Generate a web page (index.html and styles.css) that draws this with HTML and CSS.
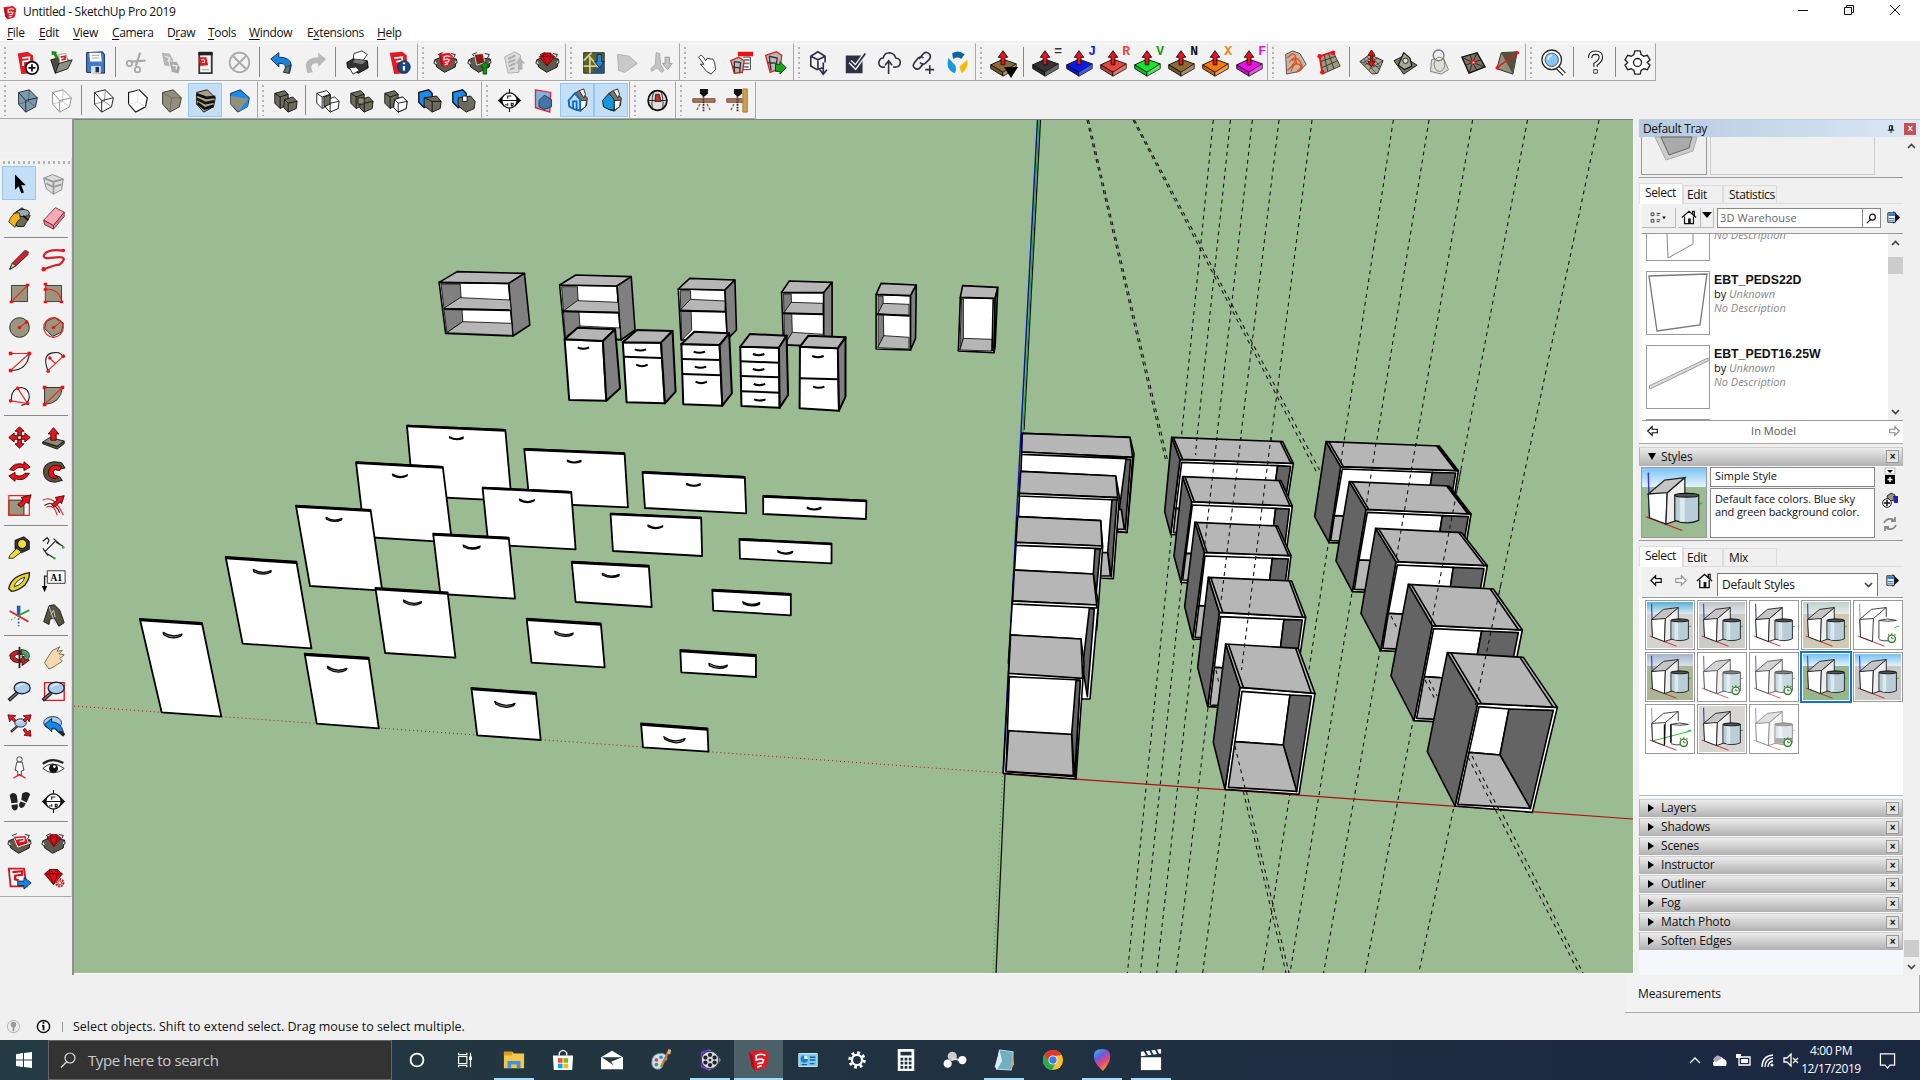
FILE: index.html
```html
<!DOCTYPE html>
<html lang="en">
<head>
<meta charset="utf-8">
<title>Untitled - SketchUp Pro 2019</title>
<link rel="stylesheet" href="styles.css">
</head>
<body>
<svg class="defs" aria-hidden="true">
  <symbol id="logo" viewBox="0 0 24 24"><path d="M1 3l16-2 6 5-3 14-12 4-4-5z" fill="#e01b24"/><path d="M1 3l4 4 3 17-4-5z" fill="#a80f18"/><path d="M8 8q5-4 11-1M9 8v4q5-2 8 0l-1 3-6 1M10 20l5-2" stroke="#fff" stroke-width="1.800" fill="none"/></symbol>
  <symbol id="box" viewBox="0 0 28 28"><path d="M4 5l12-3 9 9-2 10-11 6-8-9z"/><path d="M4 5l10 6 11 0M14 11l-2 16" fill="none" opacity=".4"/></symbol>
  <symbol id="glass" viewBox="0 0 28 28"><path d="M4 5l12-3 9 9-2 10-11 6-8-9z"/><path d="M4 5l8 9 13-3M12 14v13" fill="none"/><path d="M16 2l-1 13-11 3M15 15l8 6" fill="none" opacity=".5"/></symbol>
  <symbol id="solid" viewBox="0 0 28 28"><path d="M2 6l11-3 4 4v11l-9 5-6-6z"/><path d="M13 13l9-3 5 5-1 8-9 4-5-5z"/><path d="M2 6l6 4 9-3M8 10v13M13 13l4 4 10-2M17 17v10" fill="none"/></symbol>
  <symbol id="push" viewBox="0 0 34 34"><path d="M4 20l13-6 14 5-14 9z" fill="currentColor" stroke="#111"/><path d="M4 20v4l13 8v-4z" fill="currentColor" stroke="#111"/><path d="M17 28l14-9v5l-14 8z" fill="currentColor" stroke="#111"/><path d="M17 28l14-9v5l-14 8z" fill="#fff" opacity=".25"/><path d="M4 20v4l13 8v-4z" fill="#000" opacity=".18"/><path d="M17 5l5 7h-3v8h-4v-8h-3z" fill="#f01020" stroke="#111"/></symbol>
  <symbol id="house" viewBox="0 0 28 28"><path d="M11 6l5-3 9 8-1 9-7 6-6-2z" fill="#777567" stroke="#222"/><path d="M16 3l5-2 2 6-2 4z" fill="#eee" stroke="#222"/><path d="M17 14l7 0-1 7-6 4z" fill="#fff" stroke="#333"/><path d="M4 14l7-8 6 7v12l-6-1-6-3z" fill="currentColor" stroke="#111"/></symbol>
  <symbol id="tray" viewBox="0 0 28 28"><path d="M2 11l7-3 17 2-1 9-12 6-9-6z" fill="#5c5a4c" stroke="#111"/><path d="M2 11l-1 4 4 2M26 10l1 4-3 2M9 8l-3-3 5-2M23 9l2-4-5-1" fill="#eee" stroke="#111"/></symbol>
  <symbol id="gem" viewBox="0 0 28 28"><path d="M4 10l6-5h8l6 5-10 12z" fill="#d3131f" stroke="#500"/><path d="M4 10h20M10 5l-1 5 5 12 5-12-1-5M10 5l4 5 4-5" fill="none" stroke="#700"/></symbol>
  <symbol id="lens" viewBox="0 0 28 28"><path d="M2 24l10-9" stroke="#222" stroke-width="4"/><path d="M3 23l9-8" stroke="#777" stroke-width="1.500"/><ellipse cx="17" cy="10" rx="9" ry="6.500" fill="#a9cdec" stroke="#223" stroke-width="1.500"/><path d="M11 9q4-4 9-3" stroke="#e8f5ff" fill="none" stroke-width="1.500"/></symbol>
  <symbol id="compass" viewBox="0 0 28 28"><path d="M20 7l7 7-7 7zM8 7l-7 7 7 7z" fill="#111"/><circle cx="14" cy="14" r="8.500" fill="#fff" stroke="#111" stroke-width="1.300"/><path d="M1 14h26M14 1v5M14 22v5M16 9h-4v3M10 18v2M12 17v3M16 17h2v3h-2z" fill="none" stroke="#111" stroke-width="1.200"/></symbol>
  <symbol id="mesh" viewBox="0 0 28 28"><path d="M4 10l9-6 12 5-4 14-8 3z" fill="#aaa58d" stroke="#222"/><path d="M7 8l12 17M10 6l12 14M4 10l19 4M25 9l-15 9M21 7l-13 7M17 5l-11 7M8 16l15 1" stroke="#333" stroke-width=".7" fill="none"/></symbol>
  <symbol id="arr" viewBox="0 0 16 16"><path d="M2 8l5-5v3h6v4H7v3z" fill="#fff" stroke="currentColor" stroke-width="1.300"/></symbol>
  <symbol id="home" viewBox="0 0 18 18"><path d="M1 9l8-7 8 7M4 8v8h10V8M13 5V2h2v5" fill="#fff" stroke="#111" stroke-width="1.400"/><path d="M8 10h3v6H8z" fill="#111"/></symbol>
  <symbol id="detail" viewBox="0 0 16 16"><path d="M8 1l7 7-7 7z" fill="#111"/><path d="M2 3h8v10H2z" fill="#fff" stroke="#111"/><path d="M2.500 3.500h7v3h-7zM3 8.500h6v1H3zM3 10.500h6v1H3z" fill="#2a7fd4"/></symbol>
  <symbol id="model" viewBox="0 0 50 50"><path d="M5 2l1 36" stroke="#3a3acb" stroke-width="1.200"/><path d="M3 37l29 11" stroke="#c22" stroke-width="1"/><path d="M40 29l8-3" stroke="#2b2"/><path d="M5 19l15-2-1 26-13-5z" fill="#fff" stroke="#222"/><path d="M20 18L34 6v32l-15 5z" fill="#eee" stroke="#222"/><path d="M5 19L18 8l16-2-14 12z" fill="#c5c5c5" stroke="#222"/><path d="M26 20q9-3 19 0v20q-9 4-19 0z" fill="#b9cdd8" stroke="#222"/><path d="M30 21v20h4V20z" fill="#dbe8ee"/><ellipse cx="35.500" cy="20" rx="9.500" ry="1.500" fill="#555" stroke="#111"/></symbol>
  <symbol id="wire" viewBox="0 0 50 50"><path d="M5 2l1 36" stroke="#88c"/><path d="M3 37l29 11" stroke="#c22"/><path d="M43 28l5-2" stroke="#2b2"/><path d="M5 19l15-1-1 25-13-5zM5 19L18 8l16-2-14 12M34 6v10M26 20v20M26 20q9-3 19 0-9 2-19 0M26 41q6 2 12 1" fill="none" stroke="#333"/></symbol>
  <symbol id="clk" viewBox="0 0 12 12"><circle cx="6" cy="7" r="4" fill="#fff" stroke="#397d2c" stroke-width="1.500"/><path d="M6 1v2M6 7V5M6 7h2M2 2l1 1M10 2L9 3" stroke="#397d2c" stroke-width="1.200"/></symbol>
</svg>

<header class="title">
  <svg class="tl"><use href="#logo"/></svg><span>Untitled - SketchUp Pro 2019</span>
  <div class="win"><svg viewBox="0 0 12 12"><path d="M1 6.500h10"/></svg><svg viewBox="0 0 12 12"><path d="M1.500 3.500h7v7h-7zM3.500 3V1.500h7v7H9"/></svg><svg viewBox="0 0 12 12"><path d="M1 1l10 10M11 1L1 11"/></svg></div>
</header>
<nav class="menu"><span><u>F</u>ile</span><span><u>E</u>dit</span><span><u>V</u>iew</span><span><u>C</u>amera</span><span>D<u>r</u>aw</span><span><u>T</u>ools</span><span><u>W</u>indow</span><span>E<u>x</u>tensions</span><span><u>H</u>elp</span></nav>

<div class="bars">
 <div class="bar">
  <div class="grp">
   <b><svg viewBox="0 0 28 28"><path d="M3 4l11-2 6 4 2 20-15 1z" fill="#e01b24"/><path d="M8 9l8-1v4l-7 1v5" stroke="#fff" stroke-width="2" fill="none"/><circle cx="19" cy="20" r="7" fill="#fff" stroke="#111" stroke-width="2"/><path d="M19 16v8M15 20h8" stroke="#111" stroke-width="2"/></svg></b>
   <b><svg viewBox="0 0 28 28"><path d="M2 11l8-2 2 3 9-2 1 5-15 11z" fill="#4f4d42" stroke="#111"/><path d="M11 5l8-1 2 9-9 3z" fill="#fff" stroke="#999"/><path d="M13 8l5-1 0 3-4 1" stroke="#e01b24" stroke-width="2" fill="none"/><path d="M7 26l4-11 15-4-5 10z" fill="#928f7e" stroke="#111"/><path d="M3 1l6 1-1 2 3 4-3 2-3-5-2 1z" fill="#149015"/></svg></b>
   <b><svg viewBox="0 0 28 28"><path d="M4 3l18-1 2 3v21l-20-1z" fill="#3d7bd0" stroke="#123"/><path d="M7 3h13l1 10H8z" fill="#fff"/><path d="M10 6h8M10 9h8" stroke="#999"/><path d="M9 18h11v8H9z" fill="#ddd"/><path d="M14 19h4v6h-4z" fill="#234"/></svg></b><s></s>
   <b><svg class="g" viewBox="0 0 28 28"><path d="M6 13l17-1M17 3l-5 15" stroke-width="2.500"/><circle cx="5" cy="15" r="3" stroke-width="2"/><circle cx="14" cy="22" r="3" stroke-width="2"/></svg></b>
   <b><svg viewBox="0 0 28 28"><path d="M3 3l9 1 4 7-2 8-8-2z" fill="#b5b5b5"/><path d="M11 12l9 1 4 7-2 7-8-2z" fill="#a9a9a9" stroke="#eee"/><path d="M7 7l5 2-2 4M15 17l5 1-1 4" stroke="#eee" stroke-width="1.500" fill="none"/></svg></b>
   <b><svg viewBox="0 0 28 28"><path d="M7 4h14v22H7z" fill="#f4f4f4" stroke="#333" stroke-width="2"/><path d="M6 2h16v4H6z" fill="#222"/><path d="M6 8h9l2 9-9 1z" fill="#e01b24"/><path d="M9 11h4v3h-3" stroke="#fff" fill="none"/><path d="M10 22h8" stroke="#999"/></svg></b>
   <b><svg class="g" viewBox="0 0 28 28"><circle cx="14" cy="14" r="11" stroke-width="2"/><path d="M7 7l14 14M21 7L7 21" stroke-width="2"/></svg></b><s></s>
   <b><svg viewBox="0 0 28 28"><path d="M2 10l9-7v5q13 0 14 9l-2 9-6-1q5-11-6-10v4z" fill="#1c83dd" stroke="#124"/><path d="M24 17l-2 9-6-1 3-6z" fill="#67755b" stroke="#333"/></svg></b>
   <b><svg viewBox="0 0 28 28"><path d="M26 10l-9-7v5Q4 8 3 17l2 9 6-1q-5-11 6-10v4z" fill="#b9b9b9"/></svg></b><s></s>
   <b><svg viewBox="0 0 28 28"><path d="M10 4l9-3 6 4-7 10-9-3z" fill="#fff" stroke="#222"/><path d="M2 14l7-4 16 2 1 8-11 6-12-6z" fill="#333" stroke="#000"/><path d="M9 14l10 2 5-4-13-2z" fill="#777"/><path d="M5 20l7-1 4 4-7 4z" fill="#fff" stroke="#222"/></svg></b><s></s>
   <b><svg viewBox="0 0 28 28"><path d="M3 3l14-1 5 4 1 20-15 1z" fill="#e01b24"/><path d="M8 9l9-1v4l-7 1" stroke="#fff" stroke-width="2" fill="none"/><circle cx="19" cy="19" r="7" fill="#164a86" stroke="#0b2a52"/><path d="M19 18v5M19 14v2" stroke="#fff" stroke-width="2.500"/></svg></b>
  </div>
  <div class="grp">
   <b><svg viewBox="0 0 28 28"><use href="#tray"/><use href="#logo" x="6" y="1" width="17" height="20"/></svg></b>
   <b><svg viewBox="0 0 28 28"><use href="#tray"/><path d="M8 5l10-1 2 10-9 3z" fill="#8b1a1a" stroke="#ddd"/><path d="M20 13l5 6h-3v8h-4v-8h-3z" fill="#119015" stroke="#050"/></svg></b>
   <b><svg viewBox="0 0 28 28"><path d="M4 8l11-6 7 4-2 19-12 1z" fill="#ddd" stroke="#aaa"/><path d="M8 10l8-4M8 14l8-3M9 18l7-3M10 22l5-2" stroke="#aaa" stroke-width="2"/><path d="M21 8l6 7h-3v7h-5v-7h-3z" fill="#b5b5b5"/></svg></b>
   <b><svg viewBox="0 0 28 28"><use href="#tray"/><use href="#gem" x="1" y="-1" width="25" height="24"/></svg></b>
  </div>
  <div class="grp">
   <b><svg viewBox="0 0 28 28"><path d="M3 3h23v23H3z" fill="#59652e" stroke="#222"/><path d="M3 12l9-9M10 26V8l12 14M3 18h18" stroke="#d9cf85" stroke-width="2" fill="none"/><path d="M14 21l11-3v8H14z" fill="#26557f"/><path d="M18 5h5v8h3l-5 7-6-7h3z" fill="#1689ea" stroke="#124"/></svg></b>
   <b><svg viewBox="0 0 28 28"><path d="M3 5l13 2 9 8-14 10-7-2z" fill="#c9c9c9" stroke="#aaa"/></svg></b>
   <b><svg viewBox="0 0 28 28"><path d="M8 3l4 1 1 12 4 7-3 2-5-5-6 4-1-3 5-5z" fill="#c4c4c4" stroke="#aaa"/><path d="M18 8h5v7h3l-5 7-6-7h3z" fill="#c4c4c4" stroke="#999"/></svg></b>
  </div>
  <div class="grp">
   <b><svg viewBox="0 0 28 28"><path d="M6 6q2-1 6 6l2-3 3 1 3 0 2 4 1 8-5 5-5-3-4-5-3-3 4 0L4 8z" fill="#fff" stroke="#222"/></svg></b>
   <b><svg viewBox="0 0 28 28"><path d="M10 2h17v5H10z" fill="#e11"/><path d="M16 8h8v14h-9" fill="#fff" stroke="#333"/><path d="M17 11h6M17 15h6M17 19h5" stroke="#777" stroke-width="2"/><path d="M2 12l9-4 6 4-2 13-9 1z" fill="#bbb" stroke="#c22" stroke-width="1.500"/><path d="M6 13l7 1-1 11M4 19l8 1M6 13v12" stroke="#333" stroke-width="1.500" fill="none"/></svg></b>
   <b><svg viewBox="0 0 28 28"><path d="M3 6l12-4 6 4-2 15-11 4z" fill="#bbb" stroke="#d22" stroke-width="1.500"/><path d="M7 7l9 2-2 13M5 14l11 1M7 7l2 16" stroke="#333" stroke-width="1.500" fill="none"/><path d="M14 16h5v-3l7 7-7 7v-3h-5z" fill="#1ba01b" stroke="#040"/></svg></b>
  </div>
  <div class="grp ink">
   <b><svg viewBox="0 0 28 28"><path d="M15 20l-6 2-7-4V7l8-5 8 5v7M2 7l8 4 8-4M10 11v10M16 14v13M12 22l4 5 4-5"/></svg></b>
   <b><svg viewBox="0 0 28 28"><path d="M4 7h17v18H4z"/><path d="M8 13l6 6L25 4"/><path d="M8 13l6 6L25 4"/></svg></b>
   <b><svg viewBox="0 0 28 28"><path d="M9 19q-7 1-7-5 1-5 5-5 1-6 7-6 6 1 7 6 6 1 5 6-1 5-8 4M13 27V13M9 17l4-5 4 5"/></svg></b>
   <b><svg viewBox="0 0 28 28"><path d="M9 10l5-6q4-3 7 1 2 3-1 6l-4 4q-3 2-6-1M14 9q-3-3-6 0l-4 5q-3 4 0 6 3 3 6 0l4-5M21 17v10M16 22h10"/></svg></b>
   <b><svg class="c" viewBox="0 0 28 28"><path d="M8 4q7-5 14 1l-4 5q-3-3-9 0z"/><path d="M4 9l8 9q1 4-1 8Q0 22 4 9z"/><path d="M25 11q2 9-6 15l-3-7z"/></svg></b>
  </div>
  <div class="grp push">
   <b style="color:#8d6a35"><svg><use href="#push"/><path d="M17 21h14l-7 11z" fill="#000"/></svg></b><s></s>
   <b style="color:#333"><svg><use href="#push"/></svg><em>=</em></b>
   <b style="color:#0a1af0"><svg><use href="#push"/></svg><em>J</em></b>
   <b style="color:#e8463a"><svg><use href="#push"/></svg><em>R</em></b>
   <b style="color:#10e82a"><svg><use href="#push"/></svg><em class="gr">V</em></b>
   <b style="color:#8d6a35"><svg><use href="#push"/></svg><em class="bk">N</em></b>
   <b style="color:#f97a07"><svg><use href="#push"/></svg><em>X</em></b>
   <b style="color:#f20cf0"><svg><use href="#push"/></svg><em>F</em></b>
  </div>
  <div class="grp">
   <b><svg viewBox="0 0 28 28"><path d="M3 5l8-4 8 3 7 12-8 8-14 3z" fill="#c2b9a2" stroke="#444"/><path d="M5 9q7-8 9-2t-9 16M9 24q3-11 9-8t-4 9M7 14q6-10 12-1t-3 11M10 12q5-4 5 3" fill="none" stroke="#e0512a" stroke-width="1.500"/></svg></b>
   <b><svg viewBox="0 0 28 28"><path d="M3 7l15-5 8 16-20 9z" fill="#9c987f" stroke="#333"/><path d="M8 5l4 19M13 4l6 17M4 13l17-6M5 20l18-8" stroke="#333" fill="none"/><path d="M18 2L3 7l3 19" stroke="#e11" stroke-width="2" fill="none"/><circle cx="18" cy="3" r="2.500" fill="#e11"/><circle cx="3" cy="7" r="2.500" fill="#e11"/><circle cx="6" cy="25" r="2.500" fill="#e11"/></svg></b><s></s>
   <b><svg viewBox="0 0 28 28"><path d="M1 13l11-8 15 7-6 14-6 1z" fill="#aaa58d" stroke="#222"/><path d="M5 10l14 16M9 8l14 14M1 13l21 6M27 12l-16 10M21 9l-15 8M17 7l-12 7M12 5l12 14" stroke="#333" stroke-width=".8" fill="none"/><path d="M14 0l4 6h-3v7h3l-4 6-4-6h3V6h-3z" fill="#e11" stroke="#600"/></svg></b>
   <b><svg viewBox="0 0 28 28"><path d="M1 12l10-5 16 10-15 10z" fill="#77745f" stroke="#111"/><path d="M8 12l4-9 7 6 2 9-8 4-7-5z" fill="#aaa88f" stroke="#111" stroke-width="1.300"/><circle cx="14" cy="12" r="3" fill="#ddd" stroke="#111"/></svg></b>
   <b><svg viewBox="0 0 28 28"><path d="M5 11l13-3 6 14-8 5-12-3z" fill="#ddddd5" stroke="#777"/><circle cx="13" cy="6" r="6" fill="#eee" stroke="#777" stroke-width="1.500"/><ellipse cx="14" cy="16" rx="6" ry="8" fill="none" stroke="#777"/></svg></b>
   <b><svg viewBox="0 0 28 28"><path d="M1 8l17-5 9 16-18 7z" fill="#77745f" stroke="#111" stroke-width="1.500"/><path d="M1 8l12 6 14 5M18 3l-5 11-4 12M10 5l3 9 5 9M5 17l8-3 10-3" stroke="#222" fill="none"/><path d="M11 11h5v5h-5z" fill="#e11"/><path d="M13 13h2v2h-2z" fill="#fff"/></svg></b>
   <b><svg viewBox="0 0 28 28"><path d="M7 3l18-1-5 25-18-6z" fill="#928f79" stroke="#222"/><path d="M25 2L20 27 13 14 7 3z" fill="#54523f"/><path d="M2 20L25 3" stroke="#e11" stroke-width="1.500"/><circle cx="2.500" cy="20" r="2" fill="#e11"/><circle cx="25" cy="3" r="2" fill="#e11"/></svg></b>
  </div>
  <div class="grp">
   <b><svg viewBox="0 0 28 28"><path d="M17 18l9 9" stroke="#222" stroke-width="5"/><path d="M17 18l9 9" stroke="#fff" stroke-width="2.500"/><circle cx="12" cy="11" r="11" fill="#fff" stroke="#222" stroke-width="1.500"/><circle cx="12" cy="11" r="7.500" fill="#84c6f8" stroke="#444"/><path d="M8 11q0-4 4-5" stroke="#dff2ff" stroke-width="2" fill="none"/></svg></b><s></s>
   <b><svg viewBox="0 0 28 28"><path d="M8 9q0-6 6-6t6 5q0 4-6 8v3" fill="none" stroke="#222" stroke-width="5"/><path d="M8 9q0-6 6-6t6 5q0 4-6 8v3" fill="none" stroke="#fff" stroke-width="2.500"/><path d="M12 22h4v4h-4z" fill="#fff" stroke="#222"/></svg></b><s></s>
   <b><svg viewBox="0 0 28 28"><path d="M11 1h6l1 4 3 2 4-1 3 5-3 3 3 3-3 5-4-1-3 2-1 4h-6l-1-4-3-2-4 1-3-5 3-3-3-3 3-5 4 1 3-2z" fill="#fff" stroke="#222" stroke-width="1.500"/><circle cx="14" cy="14" r="4.500" fill="#fff" stroke="#222" stroke-width="1.500"/></svg></b>
  </div>
 </div>
 <div class="bar">
  <div class="grp">
   <b><svg fill="#7c9aac" stroke="#223"><use href="#glass"/></svg></b><b><svg fill="#fff" stroke="#888"><use href="#glass"/></svg></b><s></s>
   <b><svg fill="#fff" stroke="#111"><use href="#glass"/></svg></b><b><svg viewBox="0 0 28 28"><path d="M4 5l12-3 9 9-2 10-11 6-8-9z" fill="#fff" stroke="#111" stroke-width="1.300"/><path d="M15 2l-1 14-10 2M14 16l9 5" stroke="#ddd" fill="none"/></svg></b><b><svg fill="#948f7a" stroke="#333"><use href="#box"/></svg></b>
   <b class="on"><svg viewBox="0 0 28 28"><path d="M4 5l12-3 9 9-2 10-11 6-8-9z" fill="#a7a287" stroke="#111"/><path d="M4 7l11 4 10-1M4 12l10 5 10-2M5 17l8 6 10-3" stroke="#111" stroke-width="3" fill="none"/></svg></b>
   <b><svg viewBox="0 0 28 28"><path d="M4 6l11-4 10 9-2 10-11 6-8-9z" fill="#1a8bf0" stroke="#124"/><path d="M4 9l20 3-11 14-9-8z" fill="#948f7a"/><path d="M24 12l-1 9-10 6z" fill="#1a8bf0"/></svg></b>
  </div>
  <div class="grp">
   <b><svg fill="#6d6b5c" stroke="#111"><use href="#solid"/></svg></b><s></s>
   <b><svg viewBox="0 0 28 28"><use href="#solid" fill="#fff" stroke="#111"/><path d="M10 10l7-2v10l-7 3z" fill="#6d6b5c" stroke="#111"/></svg></b>
   <b><svg viewBox="0 0 28 28"><use href="#solid" fill="#6d6b5c" stroke="#111"/><path d="M10 11h7v7h-7z" fill="#8a8875" stroke="#111"/></svg></b>
   <b><svg viewBox="0 0 28 28"><use href="#solid" fill="#6d6b5c" stroke="#111"/><path d="M13 13l9-3 5 5-1 8-9 4-5-5z" fill="#fff" stroke="#111"/><path d="M13 13l4 4 10-2M17 17v10" stroke="#111" fill="none"/></svg></b>
   <b><svg viewBox="0 0 28 28"><path d="M2 5l11-3 4 4v11l-9 5-6-6z" fill="#1a8bf0" stroke="#111" stroke-width="1.500"/><path d="M8 11l14-2 5 6-1 8-9 4-9-7z" fill="#6d6b5c" stroke="#111"/><path d="M8 11l9 4 10 0M17 15v12" stroke="#111" fill="none"/></svg></b>
   <b><svg viewBox="0 0 28 28"><path d="M2 5l11-3 4 4v11l-9 5-6-6z" fill="#1a8bf0" stroke="#111" stroke-width="1.500"/><path d="M8 11l14-2 5 6-1 8-9 4-9-7z" fill="#6d6b5c" stroke="#111"/><path d="M13 9h5v6h-5z" fill="#fff" stroke="#111"/></svg></b>
  </div>
  <div class="grp">
   <b><svg><use href="#compass"/></svg></b>
   <b><svg viewBox="0 0 28 28"><path d="M5 2l17 3-1 22L5 22z" fill="#7fb4de" stroke="#e23" stroke-width="1.500"/><path d="M9 14l6-6 8 5v8l-8 3-6-3z" fill="#4476a5" stroke="#235"/></svg></b>
   <b class="on"><svg viewBox="0 0 28 28" style="color:#b9dcf5"><use href="#house"/><path d="M4 14l7-8 6 7v12l-6-1-6-3zM9 23v-8h4v9" fill="none" stroke="#0a68c8" stroke-width="2"/></svg></b>
   <b class="on"><svg style="color:#1597db"><use href="#house"/></svg></b>
  </div>
  <div class="grp"><b><svg viewBox="0 0 28 28"><ellipse cx="14" cy="14" rx="10.500" ry="11" fill="#ddd" stroke="#111" stroke-width="2"/><path d="M4 14h20M11 3q-4 5-3 21M17 3q4 5 3 21" stroke="#222" fill="none"/><path d="M12 7h4l2 8h-7z" fill="#b32" stroke="#411"/></svg></b></div>
  <div class="grp">
   <b><svg viewBox="0 0 28 28"><path d="M2 12h25v4H2z" fill="#a8794e" stroke="#744"/><path d="M10 1h9v5l-3 3h-3l-3-3z" fill="#111"/><path d="M14 9v18" stroke="#333" stroke-width="2" stroke-dasharray="2 1"/><path d="M10 18l-4 8M18 18l4 8" stroke="#863" stroke-dasharray="3 1.500" stroke-width="1.500"/></svg></b>
   <b><svg viewBox="0 0 28 28"><path d="M2 12h20v4H2z" fill="#a8794e" stroke="#744"/><path d="M10 1h9v5l-3 3h-3l-3-3z" fill="#111"/><path d="M14 9v18" stroke="#333" stroke-width="2" stroke-dasharray="2 1"/><path d="M10 18l-4 8" stroke="#863" stroke-dasharray="3 1.500" stroke-width="1.500"/><path d="M20 1h5v26h-5z" fill="#d0a04f" stroke="#a87a30"/></svg></b>
  </div>
 </div>
</div>

<main>
<aside class="tools">
 <div class="pal">
  <i class="grip"></i>
  <b class="on"><svg viewBox="0 0 28 28"><path d="M9 4l12 12h-5l3 8-3 1-3-8-4 4z" fill="#000"/></svg></b>
  <b><svg viewBox="0 0 28 28"><path d="M3 8l10-4 12 5-2 12-9 5-8-6z" fill="#ddd" stroke="#888"/><path d="M3 8l11 4 11-3M14 12v14M6 14l8 4 9-3" fill="none" stroke="#999" stroke-width="2"/></svg></b>
  <b><svg viewBox="0 0 28 28"><path d="M7 10l10-7 9 9-7 12-8 0z" fill="#6b6a5a" stroke="#111"/><ellipse cx="18" cy="9" rx="7" ry="4" fill="#9ab" stroke="#111"/><path d="M2 19q4-12 12-10l1 7q-4 1-6 9z" fill="#f5b223" stroke="#333"/><path d="M18 12l6 5" stroke="#111" stroke-width="2"/></svg></b>
  <b><svg viewBox="0 0 28 28"><path d="M3 17L16 3l10 5-12 15z" fill="#f8a8b8" stroke="#733"/><path d="M3 17l11 6v4L4 22zM14 23L26 8v5L14 27z" fill="#dd7f95" stroke="#733"/></svg></b>
  <s></s>
  <b><svg viewBox="0 0 28 28"><path d="M3 25l3-7L20 4l4 4L10 21z" fill="#d2222a" stroke="#222"/><path d="M3 25l3-7 4 3z" fill="#e9c9a0" stroke="#222"/><path d="M19 5l2-2 4 3-2 2z" fill="#933"/></svg></b>
  <b><svg viewBox="0 0 28 28"><path d="M25 4Q8 2 4 8t10 4 11 3-6 5-16 5" fill="none" stroke="#d2222a" stroke-width="2.500"/><circle cx="25" cy="4" r="2" fill="#e11"/><circle cx="3" cy="25" r="2.500" fill="#e11"/></svg></b>
  <b><svg viewBox="0 0 28 28"><path d="M5 5h18v18H5z" fill="#9a967d" stroke="#333"/><path d="M5 23L23 5" class="ra"/><path d="M3 22h4v3H3zM21 3h4v3h-4z" fill="#e11"/></svg></b>
  <b><svg viewBox="0 0 28 28"><path d="M5 5h18v18H5z" fill="#9a967d" stroke="#333"/><path d="M5 3v21M5 9q16 0 18 14" class="ra"/><path d="M3 2h4v3H3zM3 8h4v3H3zM3 22h4v3H3zM21 22h4v3h-4z" fill="#e11"/></svg></b>
  <b><svg viewBox="0 0 28 28"><circle cx="14" cy="14" r="11" fill="#9a967d" stroke="#222"/><path d="M14 14l8-6" class="ra"/><circle cx="14" cy="14" r="2" fill="#e11"/><circle cx="22" cy="8" r="2" fill="#e11"/></svg></b>
  <b><svg viewBox="0 0 28 28"><path d="M6 7l9-4 10 6-2 10-10 5-9-9z" fill="#9a967d" stroke="#222"/><circle cx="14" cy="14" r="11" class="ra"/><path d="M14 14l8-6" class="ra"/><circle cx="14" cy="14" r="2" fill="#e11"/></svg></b>
  <b><svg viewBox="0 0 28 28"><path d="M25 5q-2 19-21 19" class="ka"/><path d="M4 5h21L4 24" class="ra"/><path d="M2 3h4v4H2zM23 3h4v4h-4zM2 22h4v4H2z" fill="#e11"/></svg></b>
  <b><svg viewBox="0 0 28 28"><path d="M8 25Q0 5 15 4q8-1 10 6" class="ka"/><path d="M8 24L25 8M9 10l7 6" class="ra"/><circle cx="8" cy="25" r="2" fill="#e11"/><circle cx="25" cy="8" r="2" fill="#e11"/><circle cx="10" cy="10" r="2" fill="#e11"/></svg></b>
  <b><svg viewBox="0 0 28 28"><path d="M5 20Q4 6 16 5q9 1 9 11-1 8-9 9" class="ka"/><path d="M12 6l11 17L4 20" class="ra"/><circle cx="12" cy="6" r="2" fill="#e11"/><circle cx="23" cy="23" r="2" fill="#e11"/><circle cx="4" cy="20" r="2" fill="#e11"/></svg></b>
  <b><svg viewBox="0 0 28 28"><path d="M4 5h20q-2 18-20 19z" fill="#9a967d" stroke="#222"/><path d="M24 5L4 24" class="ra"/><path d="M2 3h4v4H2zM22 3h4v4h-4zM2 22h4v4H2z" fill="#e11"/></svg></b>
  <s></s>
  <b><svg viewBox="0 0 28 28"><path d="M14 2l5 5h-3v5h-4V7H9zM14 26l5-5h-3v-5h-4v5H9zM2 14l6-5v3h4v4H8v3zM26 14l-6-5v3h-4v4h4v3z" fill="#e8141e" stroke="#400"/></svg></b>
  <b><svg viewBox="0 0 28 28"><path d="M2 19l8-5 16 4-8 6z" fill="#8b8873" stroke="#111"/><path d="M2 19v2l16 6 8-6v-3l-8 6z" fill="#57553f" stroke="#111"/><path d="M14 3l6 7h-3v7h-6v-7H8z" fill="#e8141e" stroke="#400"/></svg></b>
  <b><svg viewBox="0 0 28 28"><path d="M3 12Q8 3 19 6l0-3 7 6-7 4 0-3Q11 8 8 13zM25 16q-5 10-16 6l0 3-7-6 7-4 0 3q8 3 11-2z" fill="#e8141e" stroke="#400"/></svg></b>
  <b><svg viewBox="0 0 28 28"><path d="M3 17Q1 5 14 3l9 1 4 6-8 2Q9 10 12 17l9 3 3 4-8 2Q5 26 3 17z" fill="#57553f" stroke="#111"/><path d="M8 16q1-10 10-9l5 1-2 5-5-1q-4 1-1 6l4 2-2 2Q9 22 8 16z" fill="#e8141e" stroke="#400"/></svg></b>
  <b><svg viewBox="0 0 28 28"><path d="M2 8h17v17H2z" fill="#9a967d" stroke="#222"/><path d="M2 3h23v22H2z" class="ra"/><path d="M12 13l6-5-2-3 11-3-3 10-2-2-6 6z" fill="#e8141e" stroke="#400"/></svg></b>
  <b><svg viewBox="0 0 28 28"><path d="M2 8q12-7 23 17M6 16q9-4 12 9" class="ra"/><path d="M4 14q10-7 17 8" class="ka"/><path d="M12 13l6-5-2-3 10-2-3 9-2-2-6 6z" fill="#e8141e" stroke="#400"/></svg></b>
  <s></s>
  <b><svg viewBox="0 0 28 28"><path d="M9 6l10-4 6 5v9l-9 4-7-4z" fill="#333" stroke="#111"/><circle cx="17" cy="10" r="5" fill="#f2dc3e" stroke="#111"/><path d="M11 15l-8 8-1 3 5 0 9-7z" fill="#f2dc3e" stroke="#222"/></svg></b>
  <b><svg viewBox="0 0 28 28"><path d="M4 19L17 6M14 4l8 7M2 15l6 8M17 8l8 5M5 20l10 6M2 7l5-4 2 3-2 4" fill="none" stroke="#222" stroke-width="1.300"/><circle cx="25" cy="14" r="1.500" fill="#2b2"/><circle cx="15" cy="26" r="1.500" fill="#2b2"/></svg></b>
  <b><svg viewBox="0 0 28 28"><path d="M2 22Q4 8 25 4q1 6-5 14-8 7-15 7z" fill="#e8d531" stroke="#222" stroke-width="1.500"/><path d="M8 20q1-7 12-11-2 8-12 11z" fill="#f0f0f0" stroke="#222"/></svg></b>
  <b><svg viewBox="0 0 28 28"><path d="M7 2h20v14H7z" fill="#fff" stroke="#222"/><path d="M7 8H4v12" fill="none" stroke="#222" stroke-width="1.500"/><path d="M1 19h6l-3 7z"/><text x="17" y="13" class="a1">A1</text></svg></b>
  <b><svg viewBox="0 0 28 28"><path d="M13 3v11" stroke="#1c5fbf" stroke-width="4"/><path d="M13 14l12-6" stroke="#2a9d3a" stroke-width="2"/><path d="M3 9l21 12" stroke="#d22" stroke-width="2"/><path d="M13 14L3 20" stroke="#2a9d3a" stroke-dasharray="2 2"/><path d="M13 17v9" stroke="#1c5fbf" stroke-width="2" stroke-dasharray="2 2"/></svg></b>
  <b><svg viewBox="0 0 28 28"><path d="M3 21L9 3l6-1 6 6 5 14-6 4-5-9-5 1-1 6z" fill="#57553f" stroke="#111"/><path d="M9 4l7 20M11 13l3-5 2 8" fill="none" stroke="#ccc"/></svg></b>
  <s></s>
  <b><svg viewBox="0 0 28 28"><path d="M3 11q6-7 14-4v4q-7-2-9 2 4 5 9 2v-3l8 5-8 6v-4Q4 22 3 11z" fill="#c8202a" stroke="#300"/><path d="M16 5q9 1 9 7 0 4-5 5l-1-3q4-3-3-4z" fill="#4fa36a" stroke="#131"/><path d="M14 2v24" stroke="#222" stroke-width="2"/></svg></b>
  <b><svg viewBox="0 0 28 28"><path d="M4 20q5-9 9-14l8-4-3 5 6-1-4 4 6 1-5 4 3 3-9 6-6 3z" fill="#f6d9ae" stroke="#664"/></svg></b>
  <b><svg><use href="#lens"/></svg></b>
  <b><svg viewBox="0 0 28 28"><path d="M4 4h22v20H4z" fill="none" stroke="#e11" stroke-width="1.500"/><use href="#lens"/></svg></b>
  <b><svg viewBox="0 0 28 28"><use href="#lens" x="3" y="4" width="20" height="20"/><path d="M1 2l9 1-3 2 3 3-2 2-3-3-2 3zM27 2l-9 1 3 2-3 3 2 2 3-3 2 3zM27 26l-8-1 2-2-3-4 2-2 3 4 3-2z" fill="#e8141e" stroke="#400" stroke-width=".8"/></svg></b>
  <b><svg viewBox="0 0 28 28"><ellipse cx="13" cy="11" rx="10" ry="7" fill="#a9cdec" stroke="#223"/><path d="M17 17l9 8" stroke="#222" stroke-width="4"/><path d="M4 13l8-7v4q10 0 13 11l-6 0q-2-5-7-4v4z" fill="#1687e6" stroke="#124"/></svg></b>
  <s></s>
  <b><svg viewBox="0 0 28 28"><circle cx="14" cy="5" r="3" fill="#fff" stroke="#333"/><path d="M11 8h6l2 9-3 1v5h-4v-5l-3-1z" fill="#fff" stroke="#333"/><path d="M7 26l7-4 7 4" fill="none" stroke="#e22" stroke-width="1.500"/></svg></b>
  <b><svg viewBox="0 0 28 28"><path d="M2 15Q12 5 26 15q-12 10-24 0z" fill="#fff" stroke="#222"/><circle cx="14" cy="15" r="5" fill="#111"/><circle cx="15" cy="13" r="1.500" fill="#fff"/><path d="M2 10Q12 2 25 9" stroke="#222" stroke-width="2.500" fill="none"/></svg></b>
  <b><svg viewBox="0 0 28 28"><path d="M3 7q4-5 8 0l1 8-7 1zM5 18l7-1q1 6-3 7-4 0-4-6zM17 5q5-4 9 1l-4 9-6-3zM15 14l6 2q-2 6-6 5-3-2 0-7z" fill="#222"/></svg></b>
  <b><svg><use href="#compass"/></svg></b>
  <s></s>
  <b><svg viewBox="0 0 28 28"><use href="#tray"/><path d="M7 6l14-1 3 9-12 4z" fill="#d3131f" stroke="#fff"/><path d="M10 9l9-1 0 3-5 1" stroke="#fff" stroke-width="1.500" fill="none"/></svg></b>
  <b><svg viewBox="0 0 28 28"><use href="#tray"/><use href="#gem" x="2" y="0" width="25" height="22"/></svg></b>
  <b><svg viewBox="0 0 28 28"><path d="M2 4h17l3 20H4z" fill="#fff" stroke="#d3131f" stroke-width="2"/><path d="M6 8l11-1v4l-8 1v4l4 1" stroke="#d3131f" stroke-width="2.500" fill="none"/><path d="M12 18h7v-4l8 6-8 7v-4h-7z" fill="#1687e6" stroke="#124"/></svg></b>
  <b><svg viewBox="0 0 28 28"><use href="#gem"/><circle cx="21" cy="20" r="4" fill="#eee" stroke="#b22" stroke-width="2.500" stroke-dasharray="2 1"/><circle cx="21" cy="20" r="2" fill="none" stroke="#b22"/></svg></b>
 </div>
</aside>

<svg class="view" viewBox="74 120 1559 853">
 <path d="M74 706L1003 773" stroke="#a11" stroke-dasharray="1 3"/>
 <g class="guide">
  <path d="M1213.300 120L1127.400 973M1230.500 120L1140.400 973M1252.300 120L1156.800 973M1279 120L1176 973M1312 120L1202.700 973M1393.300 120L1262.400 973M1429 120L1290 973M1472.600 120L1323.600 973M1527.500 120L1365 973M1599 120L1418.800 973"/>
  <path d="M1087 120L1166 462M1088.500 120L1168 462M1236 760L1286 973M1239 760L1289 973M1133 120L1317 473M1134.500 120L1320 471M1470 760L1579 973M1474 758L1583 973"/>
 </g>
 <path d="M1037.500 120L1003 773" stroke="#11a" stroke-width="1.500"/><path d="M1040.500 120L1024 430M1005 773L996 973" stroke="#111" stroke-width="1.300"/><path d="M1039 120L1023 433" stroke="#2a2" stroke-width="1.200"/><path d="M1002.500 776L993 973" stroke="#292" stroke-dasharray="1 3"/>
 <path d="M1003 774L1633 819" stroke="#b01010" stroke-width="1.200"/>

 <!-- open boxes, first column -->
 <g class="m" transform="translate(980 400) scale(.33333)">
  <path class="w" d="M127 100L450 112 462 162 441 397 400 395 120 300z"/><path class="t" d="M127 100L450 112 458 172 125 156z"/><path class="w" d="M125 156L458 172 441 397 413 395 440 176 125 163z"/><path class="d" d="M438 178H452L436 390 418 328z"/><path class="t" d="M415 328H424L433 388H410z"/>
  <path class="w" d="M122 214L407 228 418 290 400 536 360 534 112 420z"/><path class="t" d="M122 214L407 228 413 293 118 280z"/><path class="w" d="M118 280L413 293V300L117 288z"/><path class="d" d="M396 299H411L394 530 383 458z"/><path class="t" d="M365 458H383L391 528H360z"/>
  <path class="w" d="M113 350L362 362 368 440 350 690 100 570z"/><path class="t" d="M113 350L362 362 366 438 108 427z"/><path class="w" d="M108 427L366 438V446L108 436z"/><path class="d" d="M345 447H361L345 620 335 600z"/>
  <path class="w" d="M103 510L340 522 355 612 330 897 308 897 85 790z"/><path class="t" d="M103 510L340 522 350 615 98 603z"/><path class="w" d="M98 603L350 615V624L97 612z"/><path class="d" d="M328 626H343L322 890 308 800z"/>
  <path class="w" d="M92 705L303 717 312 792 288 1137 70 1120z"/><path class="t" d="M92 705L303 717 308 835 86 820z"/><path class="w" d="M88 830L300 840 286 1130 78 1115z"/><path class="d" d="M288 842L301 842 284 1130 275 1003z"/><path class="t" d="M86 992L275 1003 280 1127 78 1114z"/>
 </g>
 <!-- second column -->
 <g class="m" transform="translate(980 400) scale(.33333)">
  <path class="w" d="M600 178L940 190 905 415 572 403z"/><path class="d" d="M575 112L600 178 572 403 554 335z"/><path class="t" d="M575 112L908 125 940 190 600 178z"/><path class="w" d="M605 187L893 197 875 335 588 325z"/><path class="d" d="M893 197L932 199 900 405 875 335z"/><path class="t" d="M588 325L875 335 900 405 580 397z"/><path d="M580 112L608 178M901 125L933 190"/>
  <path class="w" d="M635 305L937 318 905 560 603 547z"/><path class="d" d="M608 230L635 305 603 547 582 468z"/><path class="t" d="M608 230L903 242 937 318 635 305z"/><path class="w" d="M637 315L887 325 870 470 618 460z"/><path class="d" d="M887 325L928 327 900 550 870 470z"/><path class="t" d="M618 460L870 470 900 550 608 540z"/><path d="M615 230L643 305M897 242L930 318"/>
  <path class="w" d="M673 457L933 467 900 728 638 717z"/><path class="d" d="M645 367L673 457 638 717 614 620z"/><path class="t" d="M645 367L893 378 933 467 673 457z"/><path class="w" d="M675 468L877 475 858 627 657 617z"/><path class="d" d="M877 475L925 477 893 720 858 627z"/><path class="t" d="M657 617L858 627 890 720 645 712z"/><path d="M651 367L681 457M887 378L926 467"/>
  <path class="w" d="M718 637L977 652 935 932 683 920z"/><path class="d" d="M685 532L718 637 683 920 653 802z"/><path class="t" d="M685 532L935 543 977 652 718 637z"/><path class="w" d="M722 650L912 658 893 812 703 802z"/><path class="d" d="M912 658L967 660 930 925 893 812z"/><path class="t" d="M703 802L893 812 930 925 690 915z"/><path d="M692 532L728 637M928 543L968 652"/>
  <path class="w" d="M780 862L1005 880 957 1183 735 1168z"/><path class="d" d="M737 732L780 862 735 1168 700 1027z"/><path class="t" d="M737 732L955 745 1005 880 780 862z"/><path class="w" d="M786 874L930 885 910 1035 765 1025z"/><path class="d" d="M930 885L994 888 950 1175 910 1035z"/><path class="t" d="M765 1025L910 1035 950 1174 745 1162z"/><path d="M745 732L790 862M947 745L994 880"/>
 </g>
 <!-- third column -->
 <g class="m" transform="translate(1280 400) scale(.33333)">
  <path class="w" d="M182 200L535 212 500 440 147 428z"/><path class="d" d="M138 125L182 200 147 428 104 350z"/><path class="t" d="M138 125L478 138 535 212 182 200z"/><path class="w" d="M187 207L457 217 435 357 163 347z"/><path class="d" d="M457 217L527 219 490 432 435 357z"/><path class="t" d="M163 347L435 357 490 432 152 422z"/><path d="M146 125L190 200M470 138L527 212M474 138L531 212"/>
  <path class="w" d="M258 328L573 342 533 588 217 575z"/><path class="d" d="M208 245L258 328 217 575 168 483z"/><path class="t" d="M208 245L508 258 573 342 258 328z"/><path class="w" d="M262 337L487 347 465 490 237 480z"/><path class="d" d="M487 347L565 350 525 580 465 490z"/><path class="t" d="M237 480L465 490 525 580 223 568z"/><path d="M216 245L266 328M500 258L564 342M504 258L568 342"/>
  <path class="w" d="M348 485L622 497 575 765 302 752z"/><path class="d" d="M287 385L348 485 302 752 243 640z"/><path class="t" d="M287 385L545 398 622 497 348 485z"/><path class="w" d="M352 495L520 502 498 650 325 640z"/><path class="d" d="M520 502L612 506 568 757 498 650z"/><path class="t" d="M325 640L498 650 568 757 308 745z"/><path d="M295 385L357 485M537 398L613 497"/>
  <path class="w" d="M457 677L727 690 670 975 402 962z"/><path class="d" d="M385 553L457 677 402 962 333 828z"/><path class="t" d="M385 553L640 567 727 690 457 677z"/><path class="w" d="M461 686L605 693 578 840 433 830z"/><path class="d" d="M605 693L715 698 662 968 578 840z"/><path class="t" d="M433 830L578 840 662 968 410 955z"/><path d="M394 553L467 677M631 567L716 690"/>
  <path class="w" d="M593 910L832 922 757 1237 525 1218z"/><path class="d" d="M502 758L593 910 525 1218 442 1055z"/><path class="t" d="M502 758L730 772 832 922 593 910z"/><path class="w" d="M597 920L687 927 660 1065 567 1057z"/><path class="d" d="M687 927L820 931 751 1226 660 1065z"/><path class="t" d="M567 1057L660 1065 751 1225 533 1213z"/><path d="M512 758L604 910M720 772L820 922"/>
 </g>
 <g class="guide">
  <path d="M1196.900 437L1195.600 455M1217 437L1203 560M1241 437L1220 610M1271 437L1241.500 670M1343.700 443L1341 462M1376 443L1366 507M1416 443L1396 560M1461 470L1431 625M1500.700 585L1475.500 705"/>
  <path d="M1235 746L1246 792M1468 757L1495 810M1472 756L1499 810M1425 680L1436 701M1429 680L1437 696M1391 616L1398 630M1216 670L1219 684"/>
 </g>

 <!-- bookcases and pedestals -->
 <g class="m" transform="translate(420 250) scale(.38265 .33333)">
  <path class="w" d="M50 97L232 100 243 258 67 250z"/><path class="t" d="M50 97L97 65 273 70 232 100z"/><path class="s" d="M232 100L273 70 287 225 243 258z"/>
  <path class="s n" d="M55 102H105L112 215 70 248z"/><path class="t n" d="M62 175L105 143 236 150 238 180zM70 248L112 215 240 220 242 256z"/><path class="f" d="M62 177L238 181"/>
  <path class="w" d="M365 105L515 108 525 270 378 262z"/><path class="t" d="M365 105L407 75 552 80 515 108z"/><path class="s" d="M515 108L552 80 562 240 525 270z"/>
  <path class="s n" d="M370 110H411L418 230 380 260z"/><path class="t n" d="M375 183L411 152 518 157 520 187zM400 245L418 228 523 234 524 268z"/><path class="f" d="M372 184L520 188"/>
  <path class="w" d="M675 117L797 120 803 270 682 270z"/><path class="t" d="M675 117L705 85 823 90 797 120z"/><path class="s" d="M797 120L823 90 827 240 803 268z"/>
  <path class="s n" d="M680 122H707L710 240 684 270z"/><path class="t n" d="M680 180L707 148 797 153 797 185z"/><path class="f" d="M678 182L798 185"/>
  <path class="w" d="M945 127L1055 128 1055 290 950 285z"/><path class="t" d="M945 127L965 93 1077 97 1055 128z"/><path class="s" d="M1055 128L1077 97V260L1055 290z"/>
  <path class="s n" d="M950 132H970L973 247 953 283z"/><path class="t n" d="M950 190L970 157 1053 160V192zM953 283L973 247 1055 253V288z"/><path class="f" d="M947 190L1054 193"/>
  <path class="w" d="M1192 133L1282 137V300L1192 297z"/><path class="t" d="M1192 133L1205 100 1297 105 1282 137z"/><path class="s" d="M1282 137L1297 105 1295 265 1282 300z"/>
  <path class="s n" d="M1197 138H1210L1212 258 1197 292z"/><path class="t n" d="M1196 192L1210 160 1278 163V196zM1196 293L1212 257 1278 262V297z"/><path class="f" d="M1194 193L1280 197"/>
  <path class="w" d="M1412 142L1503 145 1500 308 1407 303z"/><path class="t" d="M1412 142L1418 107 1510 112 1503 145z"/><path class="s" d="M1503 145L1510 112 1503 290 1500 308z"/><path class="s n" d="M1415 147H1420V265L1411 300z"/><path class="t n" d="M1411 300L1420 265 1495 268V303z"/><path d="M1498 148L1495 303"/>
  <g class="f">
  <path class="w" d="M378 268L478 273 487 452 390 450z"/><path class="t" d="M378 268L412 233 510 238 478 273z"/><path class="s" d="M478 273L510 238 523 415 487 452z"/>
  <path class="w" d="M530 277L630 278 640 460 540 457z"/><path class="t" d="M530 277L567 240 660 243 630 278z"/><path class="s" d="M630 278L660 243 668 425 640 460z"/><path d="M533 320L632 324"/>
  <path class="w" d="M683 282L783 285 790 467 688 463z"/><path class="t" d="M683 282L717 245 808 250 783 285z"/><path class="s" d="M783 285L808 250 815 430 790 467z"/><path d="M685 327L785 330M687 372L787 376"/>
  <path class="w" d="M837 290L938 293 940 473 840 468z"/><path class="t" d="M837 290L862 252 958 257 938 293z"/><path class="s" d="M938 293L958 257 962 435 940 473z"/><path d="M838 334L938 338M838 378L939 382M839 424L940 428"/>
  <path class="w" d="M993 290L1092 295 1095 482 992 475z"/><path class="t" d="M993 290L1015 257 1112 262 1092 295z"/><path class="s" d="M1092 295L1112 262V440L1095 482z"/><path d="M993 385L1092 388"/>
  <path d="M412 292q15 9 30 0M561 298q15 7 30 0M565 344q15 9 30 0M715 305q15 7 30 0M718 350q15 7 30 0M720 395q15 9 30 0M870 312q15 7 30 0M870 357q15 7 30 0M872 402q15 7 30 0M873 448q15 7 30 0M1025 318q15 7 30 0M1027 410q15 7 30 0"/>
  </g>
 </g>

 <!-- door and drawer fronts -->
 <g class="m p" transform="translate(120 400) scale(.4847 .33333)">
  <path d="M592 77L795 90 808 303 605 288zM834 147L1041 160 1048 322 845 309zM1078 216L1289 231 1292 340 1083 324zM1327 288L1540 302 1539 357 1327 342z"/>
  <path d="M487 187L666 201 685 427 505 411zM748 263L931 276 940 448 760 434zM1012 341L1199 353 1201 468 1017 453zM1278 417L1468 431V490L1279 476z"/>
  <path d="M363 317L517 330 541 572 392 558zM646 401L802 413 815 596 661 582zM932 485L1091 497 1097 621 940 606zM1222 569L1384 582V646L1224 632z"/>
  <path d="M218 471L364 485 395 745 253 731zM527 564L676 577 692 773 547 759zM839 656L992 670 1000 802 849 788zM1156 750L1312 765V831L1158 817z"/>
  <path d="M41 657L169 669 209 950 86 937zM381 761L513 773 534 985 406 971zM725 864L858 878 868 1020 737 1006zM1075 970L1212 985 1214 1055 1079 1042z"/>
  <path class="e" d="M592 78L795 91M834 148L1041 161M1078 217L1289 232M1327 289L1540 303M487 188L666 202M748 264L931 277M1012 342L1199 354M1278 418L1468 432M363 319L517 332M646 403L802 415M932 487L1091 499M1222 571L1384 584M218 474L364 488M527 567L676 580M839 659L992 673M1156 753L1312 768M41 660L169 672M381 764L513 776M725 867L858 881M1075 973L1212 988"/>
  <path class="h" d="M680 110q13 12 28 1l0 4q-13 8-28-1zM923 180q13 12 28 1l0 4q-13 8-28-1zM1169 250q13 12 28 1l0 4q-13 8-28-1zM1418 321q13 12 28 1l0 4q-13 8-28-1zM562 222q15 14 31 2l-1 4q-14 10-29-1zM824 297q15 14 31 2l-1 4q-14 10-29-1zM1089 375q15 14 31 2l-1 4q-14 10-29-1zM1357 452q15 14 31 2l-1 4q-14 10-29-1zM425 352q16 15 33 3l-1 5q-15 10-31-2zM708 435q17 15 35 3l-1 5q-16 10-33-2zM995 520q17 15 35 3l-1 5q-16 10-33-2zM1285 605q17 15 35 3l-1 5q-16 10-33-2zM275 508q18 16 37 4l-1 5q-17 12-35-2zM585 600q18 17 37 5l-1 5q-17 12-35-3zM897 694q18 17 38 5l-1 5q-18 12-36-3zM1215 790q18 17 38 5l-1 5q-18 12-36-3zM89 697q18 18 39 5l-2 6q-18 13-36-4zM428 799q19 19 40 6l-2 6q-18 13-37-5zM773 904q20 20 42 6l-3 7q-18 12-37-5zM1122 1010q21 21 44 6l-3 7q-19 13-39-5z"/>
 </g>
</svg>

<aside class="dock">
 <div class="dt"><span>Default Tray</span><svg class="pin" viewBox="0 0 10 10"><path d="M3 1h4v5H3zM1 6.500h8M5 7v3M6 1v5" fill="none" stroke="#111" stroke-width="1.200"/></svg><i>x</i></div>
 <div class="db">
 <div class="dc">
  <div class="comp"><i><svg viewBox="0 0 64 38"><path d="M13 0l11 23 27-9 4-14z" fill="#ccc" stroke="#aaa"/><path d="M19 0l8 18 20-7 3-11z" fill="#aaa" stroke="#666"/></svg></i><i></i></div>
  <div class="tabs"><span class="cur">Select</span><span>Edit</span><span>Statistics</span></div>
  <div class="srch"><i class="bt v"><svg viewBox="0 0 18 12"><path d="M1 1h3v3H1zM1 8h3v3H1zM7 1.500h4M7 3.500h3M7 8.500h4M7 10.500h3" fill="none" stroke="#333"/><path d="M13 5h4l-2 3z"/></svg></i><i class="bt"><svg class="hm"><use href="#home"/></svg></i><i class="bt dn"></i><span class="in">3D Warehouse</span><i class="mg"><svg viewBox="0 0 12 12"><circle cx="7" cy="4.500" r="3.200"/><path d="M5 7l-4 4"/></svg></i><svg class="det"><use href="#detail"/></svg></div>
  <div class="list">
   <div class="rows">
    <div class="row r0"><i><svg viewBox="0 0 62 26"><path d="M20 0l1 24 25-14V0" fill="none" stroke="#888"/></svg></i><p><em>No Description</em></p></div>
    <div class="row"><i><svg viewBox="0 0 62 62"><path d="M2 4l58-2-7 51-43 6z" fill="#fff" stroke="#777" stroke-width="1.300"/></svg></i><p><strong>EBT_PEDS22D</strong><br>by <em>Unknown</em><br><em>No Description</em></p></div>
    <div class="row"><i><svg viewBox="0 0 62 62"><path d="M2 40l59-28v3L3 43z" fill="#ddd" stroke="#999"/></svg></i><p><strong>EBT_PEDT16.25W</strong><br>by <em>Unknown</em><br><em>No Description</em></p></div>
    <div class="row last"><i></i></div>
   </div>
   <div class="sb"><svg viewBox="0 0 9 6"><path d="M1 5l3.500-3.500L8 5"/></svg><i></i><svg viewBox="0 0 9 6"><path d="M1 1l3.500 3.500L8 1"/></svg></div>
  </div>
  <div class="inm"><svg style="color:#111"><use href="#arr"/></svg><span>In Model</span><svg class="flip" style="color:#888"><use href="#arr"/></svg></div>
  <div class="hd open"><span>Styles</span><i>×</i></div>
  <div class="sty"><i class="pv"><svg><use href="#model"/></svg></i><div class="tx"><div>Simple Style</div><div>Default face colors. Blue sky and green background color.</div></div>
   <div class="si"><svg viewBox="0 0 16 16"><path d="M3 0h10v6H3z" fill="#fff" stroke="#bbb"/><path d="M5 2h6L8 5zM3 7h10v9H3z"/><path d="M8 9v5M5.500 11.500h5" stroke="#fff" stroke-width="1.500"/></svg><svg viewBox="0 0 16 16"><path d="M5 4l4-3 4 2v5l-6 1z" fill="#9a967d" stroke="#333"/><path d="M11 4h5v7h-4z" fill="#22b"/><circle cx="5" cy="11" r="4.300" fill="#fff" stroke="#111"/><path d="M5 8v6M2 11h6" stroke="#111" stroke-width="1.500"/></svg><svg viewBox="0 0 16 16"><path d="M2 7q2-5 8-4l3 2M14 9q-2 5-8 4l-3-2M13 1v4H9M3 15v-4h4" fill="none" stroke="#888" stroke-width="1.800"/></svg></div></div>
  <div class="tabs t2"><span class="cur">Select</span><span>Edit</span><span class="mx">Mix</span></div>
  <div class="nav"><svg style="color:#111"><use href="#arr"/></svg><svg class="flip" style="color:#999"><use href="#arr"/></svg><svg class="hm"><use href="#home"/></svg><span>Default Styles<svg viewBox="0 0 9 6"><path d="M1 1l3.500 3.500L8 1"/></svg></span><svg class="det"><use href="#detail"/></svg></div>
  <div class="grid">
   <i class="haze"><svg><use href="#model"/></svg></i><i class="grey"><svg><use href="#model"/></svg></i><i><svg><use href="#model"/></svg></i><i class="sand"><svg><use href="#model"/></svg></i><i><svg viewBox="0 0 50 50"><use href="#wire"/><use href="#clk" x="34" y="33" width="12" height="12"/></svg></i>
   <i class="olive"><svg><use href="#model"/></svg></i><i><svg viewBox="0 0 50 50"><use href="#model" opacity=".75"/><use href="#clk" x="34" y="33" width="12" height="12"/></svg></i><i><svg viewBox="0 0 50 50"><use href="#model" opacity=".75"/><use href="#clk" x="34" y="33" width="12" height="12"/></svg></i><i class="green sel"><svg><use href="#model"/></svg></i><i class="sky"><svg><use href="#model"/></svg></i>
   <i><svg viewBox="0 0 50 50"><path d="M6 38l42-11" stroke="#2b2"/><use href="#wire"/><path d="M19 20v22M26 20v20" stroke="#111" stroke-width="1.500"/><use href="#clk" x="34" y="33" width="12" height="12"/></svg></i><i class="plain"><svg><use href="#model"/></svg></i><i><svg viewBox="0 0 50 50"><use href="#model" opacity=".5"/><path d="M26 35h19v6H26z" fill="#aaa"/><use href="#clk" x="34" y="33" width="12" height="12"/></svg></i>
  </div>
  <div class="hd"><span>Layers</span><i>×</i></div><div class="hd"><span>Shadows</span><i>×</i></div><div class="hd"><span>Scenes</span><i>×</i></div><div class="hd"><span>Instructor</span><i>×</i></div><div class="hd"><span>Outliner</span><i>×</i></div><div class="hd"><span>Fog</span><i>×</i></div><div class="hd"><span>Match Photo</span><i>×</i></div><div class="hd"><span>Soften Edges</span><i>×</i></div>
 </div>
 <div class="sb big"><svg viewBox="0 0 9 6"><path d="M1 5l3.500-3.500L8 5"/></svg><i></i><svg viewBox="0 0 9 6"><path d="M1 1l3.500 3.500L8 1"/></svg></div>
 </div>
</aside>
</main>

<div class="meas"><span>Measurements</span></div>
<div class="status"><svg viewBox="0 0 16 16"><circle cx="8" cy="8" r="6.500" fill="none" stroke="#aaa"/><path d="M8 3q3 0 3 3 0 2-2 3v4H7V9Q5 8 5 6q0-3 3-3z" fill="#999"/></svg><svg viewBox="0 0 16 16"><circle cx="8" cy="8" r="6.500" fill="#fff" stroke="#111" stroke-width="1.600"/><path d="M8 3v2M8 6.500V12M6.500 7H8" stroke="#111" stroke-width="2"/></svg><i></i><span>Select objects. Shift to extend select. Drag mouse to select multiple.</span></div>

<footer class="task">
 <b class="st"><svg viewBox="0 0 16 16"><path d="M0 2.200L7 1v6.500H0zM8 .9L16 0v7.500H8zM0 8.500h7V15l-7-1zM8 8.500h8V16l-8-1z" fill="#fff"/></svg></b>
 <div class="find"><svg viewBox="0 0 16 16"><circle cx="10" cy="6" r="5"/><path d="M6.500 10L1 15.500"/></svg><span>Type here to search</span></div>
 <b><svg viewBox="0 0 24 24"><circle cx="12" cy="12" r="7" fill="none" stroke="#fff" stroke-width="2"/></svg></b>
 <b class="tv"><svg viewBox="0 0 24 24"><path d="M5 8h9v8H5zM5 4v2h9V4M5 20v-2h9v2M18 4v16" fill="none" stroke="#fff" stroke-width="1.300"/><path d="M16.500 8h3v4h-3z" fill="#fff"/></svg></b>
 <b class="run"><svg viewBox="0 0 24 24"><path d="M1 3h9l2 2h11v16H1z" fill="#f6c64b"/><path d="M1 3h9v4H1z" fill="#dd9b1f"/><path d="M5 21v-8h14v8h-4v-4H9v4z" fill="#3f93d8"/></svg></b>
 <b><svg viewBox="0 0 24 24"><path d="M8 7V4q4-5 8 0v3" fill="none" stroke="#fff" stroke-width="1.500"/><path d="M1 7h22l-1 16H2z" fill="#fff"/><path d="M6.500 10h5v5h-5z" fill="#f25022"/><path d="M12.500 10h5v5h-5z" fill="#7fba00"/><path d="M6.500 16h5v5h-5z" fill="#00a4ef"/><path d="M12.500 16h5v5h-5z" fill="#ffb900"/></svg></b>
 <b><svg viewBox="0 0 24 24"><path d="M0 9l12-7 12 7v13H0z" fill="#fff"/><path d="M1 9h22l-12 5 3 4z" fill="#23383f"/></svg></b>
 <b><svg viewBox="0 0 24 24"><path d="M2 15Q2 4 14 5q6 2 4 7-5 0-4 4 0 6-6 6-6-1-6-7z" fill="#cfe0ec" stroke="#89a"/><circle cx="7" cy="12" r="2" fill="#e33"/><circle cx="12" cy="9" r="2" fill="#2a8de0"/><circle cx="7" cy="17" r="2" fill="#3a3"/><path d="M12 20L20 3" stroke="#c87a2c" stroke-width="2.500"/><path d="M19 5l1-5 3 1-1 5z" fill="#e8b878"/></svg></b>
 <b class="run"><svg viewBox="0 0 24 24"><path d="M10 0l8 4 6 8-6 8-8 4z" fill="#4a9ae0"/><path d="M2 3l9-3v24l-9-4z" fill="#6d37c8"/><circle cx="12" cy="12" r="9.500" fill="#d5dbe2" stroke="#333"/><g fill="#222"><circle cx="12" cy="12" r="1.500"/><circle cx="12" cy="6.500" r="2.300"/><circle cx="12" cy="17.500" r="2.300"/><circle cx="7" cy="9.300" r="2.300"/><circle cx="17" cy="9.300" r="2.300"/><circle cx="7" cy="14.800" r="2.300"/><circle cx="17" cy="14.800" r="2.300"/></g></svg></b>
 <b class="run act"><svg><use href="#logo"/></svg></b>
 <b><svg viewBox="0 0 24 24"><path d="M2 5h20v14H2z" fill="#7cc7f2" stroke="#dff"/><circle cx="8" cy="11" r="4" fill="#1f7fc4"/><path d="M8 11V7a4 4 0 014 4z" fill="#fff"/><path d="M14 9h6M14 12h6M5 17h6M14 16h5" stroke="#1363a5" stroke-width="1.500"/></svg></b>
 <b><svg viewBox="0 0 24 24"><circle cx="12" cy="12" r="5.500" fill="none" stroke="#fff" stroke-width="2.500"/><circle cx="12" cy="12" r="8" fill="none" stroke="#fff" stroke-width="3" stroke-dasharray="3.100 3.180"/></svg></b>
 <b><svg viewBox="0 0 24 24"><path d="M3 0h18v24H3z" fill="#fff"/><path d="M6 3h12v4H6z" fill="#20313f"/><path d="M6 11h12M6 15.500h12M6 20h12" stroke="#20313f" stroke-width="3" stroke-dasharray="3 1.500"/></svg></b>
 <b><svg viewBox="0 0 24 24"><circle cx="9" cy="8" r="5" fill="#ccc"/><circle cx="4" cy="16" r="4.500" fill="#fff"/><path d="M9 10l11 3" stroke="#ddd" stroke-width="2"/><circle cx="20" cy="12" r="4.500" fill="#fff"/></svg></b>
 <b class="run two"><svg viewBox="0 0 24 24"><path d="M7 1l15 2-2 20-16-1z" fill="#6fb0c3" stroke="#cde"/><path d="M7 1L2 19l2 4 6-10z" fill="#d9eef2"/><path d="M22 3l1 14-4 6z" fill="#b8a98a"/></svg></b>
 <b><svg viewBox="0 0 24 24"><circle cx="12" cy="12" r="11" fill="#fbc02d"/><path d="M2.500 6.500A11 11 0 0011 23l4-8-7-2z" fill="#2da94f"/><path d="M2.500 6.500A11 11 0 0121.500 6.500L12 8l-5 5z" fill="#e0382c"/><circle cx="12" cy="12" r="5" fill="#fff"/><circle cx="12" cy="12" r="4" fill="#3b7ded"/></svg></b>
 <b class="run"><svg viewBox="0 0 24 24"><defs><linearGradient id="pg" x1="0" y1="0" x2=".6" y2="1"><stop offset="0" stop-color="#28c6f0"/><stop offset=".4" stop-color="#6a5ae0"/><stop offset=".7" stop-color="#e2457c"/><stop offset="1" stop-color="#f79a2c"/></linearGradient></defs><path d="M12 0q9 0 9 8 0 7-8 16l-2-2Q3 15 3 8q0-8 9-8z" fill="url(#pg)"/></svg></b>
 <b class="run"><svg viewBox="0 0 24 24"><path d="M1 9h22v14H1z" fill="#fff"/><path d="M1 3L23 0v5L1 8z" fill="#fff"/><path d="M5 2l3 5M11 1l3 6M17 0l3 6" stroke="#20313f" stroke-width="2"/></svg></b>
 <div class="sys">
  <svg viewBox="0 0 16 16"><path d="M3 11l5-5 5 5" class="l"/></svg><svg viewBox="0 0 16 16"><path d="M3 14q-3-4 2-6 3-6 8-1 4 2 2 7z" fill="#fff"/><path d="M2 8q4-8 9-2l-6 4z" fill="#aab"/></svg><svg viewBox="0 0 16 16"><path d="M4 5h11v8H4z" class="l"/><path d="M6 7h7v4H6zM1 2h5v4H1z" fill="#fff"/></svg><svg viewBox="0 0 16 16"><path d="M3 15Q3 4 14 3M6 15q0-8 8-9M9 15q0-5 5-6" class="l"/><circle cx="13" cy="13" r="1.500" fill="#fff"/></svg><svg viewBox="0 0 16 16"><path d="M1 6h3l4-4v12l-4-4H1zM10 6l5 5M15 6l-5 5" class="l"/></svg>
  <div class="clock">4:00 PM<br>12/17/2019</div>
  <svg class="no" viewBox="0 0 18 18"><path d="M1.500 2h15v12h-5l-2.500 3-2.500-3h-5z" class="l"/></svg>
 </div>
</footer>
</body>
</html>
```
FILE: styles.css
```css
* { box-sizing: border-box; }
html, body { margin: 0; height: 1080px; overflow: hidden; }
body { width: 1920px; background: #f0f0f0; color: #111; font: 12px/16px "Open Sans", "Noto Sans", sans-serif; display: flex; flex-direction: column; position: relative; }
i, em.bk { font-style: normal; }
svg { display: block; overflow: visible; flex: none; }
.defs { position: absolute; width: 0; height: 0; }

.title { height: 24px; background: #fff; display: flex; align-items: center; padding-left: 3px; letter-spacing: -.3px; flex: none; }
.tl { width: 14px; height: 15px; margin-right: 6px; }
.win { margin-left: auto; display: flex; gap: 34px; padding-right: 19px; margin-top: -4px; }
.win svg { width: 12px; height: 12px; fill: none; stroke: #111; }
.menu { height: 17px; background: #fff; display: grid; grid-template-columns: 32px 34px 39px 55px 41px 41px 58px 70px 40px; padding-left: 7px; line-height: 18px; letter-spacing: -.35px; flex: none; }
.menu u { text-underline-offset: 2px; }

.bars { height: 78px; padding-top: 2px; flex: none; }
.bar { display: flex; height: 38px; }
.grp { display: flex; align-items: center; height: 38px; padding: 0 1px 0 10px; border-right: 1px solid #a8a8a8; border-bottom: 1px solid #a8a8a8; border-top: 1px solid #fafafa; background: repeating-linear-gradient(#b4b4b4 0 2px, #f0f0f0 2px 5px) 4px 3px / 2px 31px no-repeat, #f2f2f2; }
.grp b, .pal b { width: 34px; height: 34px; display: flex; align-items: center; justify-content: center; position: relative; }
.grp b svg, .pal b svg { width: 25px; height: 25px; }
.grp s, .pal s { width: 8px; height: 30px; background: linear-gradient(#888, #888) 3px 0 / 1px 100% no-repeat; }
.on { background: #c4def5; border: 1px solid #90c8f6; }
.g { fill: none; stroke: #a9a9a9; }
.ink path { fill: none; stroke: #2f3143; stroke-width: 1.800px; }
.ink .c path { stroke: none; }
.ink .c path:nth-child(1) { fill: #0b64a0; }
.ink .c path:nth-child(2) { fill: #109bdc; }
.ink .c path:nth-child(3) { fill: #fbb900; }
.ink b:nth-child(2) path:nth-child(1) { fill: #2f3143; }
.ink b:nth-child(2) path:nth-child(2) { stroke: #f2f2f2; stroke-width: 5px; }
.ink b:nth-child(2) path:nth-child(3) { stroke: #2f3143; stroke-width: 2px; }
.grp.push b svg { width: 32px; height: 32px; }
.push em { position: absolute; right: 0; top: 0; font: bold 13px/13px "Liberation Mono", monospace; }
.push .gr { color: #159a25; }
.push .bk { color: #111; }

main { display: flex; height: 856px; flex: none; }
.tools { width: 74px; height: 856px; padding-top: 39px; border-right: 2px solid #909090; flex: none; }
.pal { width: 72px; height: 739px; padding: 8px 0 0 2px; display: grid; grid-template-columns: 34px 34px; align-content: start; background: #f2f2f2; border-bottom: 1px solid #aaa; border-right: 1px solid #ddd; }
.pal .grip { grid-column: 1 / 3; height: 3px; margin: -5px 0 2px 1px; background: repeating-linear-gradient(90deg, #b4b4b4 0 2px, transparent 2px 5px); }
.pal s { grid-column: 1 / 3; width: auto; height: 8px; margin: 0 2px; background: linear-gradient(#888, #888) 0 3px / 100% 1px no-repeat; }
.ra { fill: none; stroke: #e22; stroke-width: 1.300px; }
.ka { fill: none; stroke: #222; stroke-width: 1.300px; }
.a1 { font: bold 11px "Liberation Serif", serif; text-anchor: middle; }

.view { width: 1559px; height: 853px; background: #9bbc92; overflow: hidden; margin-top: 1px; box-shadow: 0 -1px #808080, 1px 1px #fff; }
.view * { vector-effect: non-scaling-stroke; }
.guide { fill: none; stroke: #151515; stroke-width: 1.100px; stroke-dasharray: 4 4; }
.m { stroke: #000; stroke-width: 1.600px; stroke-linejoin: round; fill: none; }
.m .w { fill: #fff; }
.m .t { fill: #b6b6b6; }
.m .d { fill: #646464; }
.m .s { fill: #808080; }
.m .n { stroke-width: .8px; }
.m .f { stroke-width: 2px; }
.p path { fill: #fff; stroke-width: 1.800px; }
.p .e { fill: none; stroke-width: 2.600px; }
.p .h { fill: #8a8f98; stroke-width: 1.200px; }

.dock { width: 281px; margin-left: 6px; flex: none; font-size: 11px; line-height: 14px; }
.dt { height: 18px; background: linear-gradient(90deg, #b5cae0, #dce8f4); display: flex; align-items: center; padding: 0 4px; border-top: 1px solid #c6d0da; font-size: 12px; letter-spacing: -.35px; }
.dt .pin { width: 8px; height: 10px; margin-left: auto; margin-right: 9px; }
.dt i { width: 12px; height: 12px; background: #c75050; color: #fff; font: bold 9px/11px "Liberation Sans", sans-serif; text-align: center; }
.db { display: flex; height: 838px; }
.dc { width: 264px; background: #f4f7fc; }
.sb { width: 15px; display: flex; flex-direction: column; align-items: center; background: #f0f0f0; padding: 6px 0 5px; }
.sb svg, .nav span svg { width: 9px; height: 6px; fill: none; stroke: #444; stroke-width: 1.700px; }
.sb i { width: 15px; height: 17px; background: #cdcdcd; margin: 11px 0 auto; }
.sb.big { width: 17px; height: 838px; }
.sb.big i { margin: auto 0 7px; }
.comp { height: 41px; background: #f0f0f0; border-bottom: 1px solid #999; display: flex; gap: 3px; padding-left: 2px; }
.comp i { width: 66px; height: 38px; border: 1px solid #999; border-top: 0; }
.comp i + i { width: 165px; border-color: #ccc; }
.tabs { height: 26px; background: #f0f0f0; display: flex; align-items: flex-end; box-shadow: inset 0 -1px #dcdcdc; font-size: 12px; letter-spacing: -.35px; }
.tabs span { height: 19px; width: 40px; padding-left: 3px; border: 1px solid #dcdcdc; border-bottom: 0; line-height: 18px; }
.tabs .cur { height: 21px; width: 44px; padding-left: 5px; background: #fff; }
.tabs span:nth-child(3) { width: 54px; padding-left: 5px; }
.tabs .mx { width: 41px; }
.srch { height: 30px; background: #f0f0f0; margin-left: 3px; border-bottom: 1px solid #999; display: flex; align-items: center; padding-bottom: 2px; }
.bt { width: 23px; height: 20px; border: 1px solid #bbb; border-width: 0 1px 1px 0; display: flex; align-items: center; justify-content: center; }
.bt.v { width: 34px; margin-right: 2px; }
.bt.v svg { width: 17px; height: 11px; }
.hm { width: 16px; height: 17px; }
.dn { width: 13px; }
.dn::before { content: ""; border: 5px solid transparent; border-top: 6px solid #000; border-bottom: 0; margin-top: -5px; }
.in { width: 146px; height: 20px; margin-left: 3px; background: #fff; border: 1px solid #888; color: #666; padding: 2px; letter-spacing: .1px; }
.mg { width: 18px; height: 20px; background: #fff; border: 1px solid #888; border-left: 0; padding: 4px 3px; }
.mg svg { width: 11px; height: 11px; fill: none; stroke: #111; stroke-width: 1.300px; }
.det { width: 15px; height: 15px; margin-left: 5px; }
.list { height: 187px; margin-left: 3px; background: #fff; border-bottom: 1px solid #999; display: flex; overflow: hidden; }
.rows { width: 246px; padding-left: 4px; }
.row { display: flex; height: 74px; gap: 4px; }
.row i { width: 64px; height: 64px; border: 1px solid #999; flex: none; }
.row p { margin: 0; padding-top: 2px; white-space: nowrap; }
.row strong { font: bold 12.300px/13px "Liberation Sans", sans-serif; }
.row em { color: #888; }
.row.r0 { height: 37px; }
.row.r0 i { height: 27px; border-top: 0; }
.row.r0 p { margin-top: -8px; }
.inm { height: 22px; background: #fff; margin-left: 3px; display: flex; align-items: center; justify-content: space-between; padding: 0 2px 3px 4px; color: #555; }
.inm svg { width: 14px; height: 14px; }
.flip { transform: scaleX(-1); }
.hd { height: 18px; margin-bottom: 1px; border: 1px solid #b2b2b2; border-top-color: #d0d0d0; background: linear-gradient(#ececec, #b4b4b4); display: flex; align-items: center; padding: 0 3px 0 8px; font-size: 12px; letter-spacing: -.15px; }
.hd::before { content: ""; border: 4px solid transparent; border-left: 6px solid #000; border-right: 0; margin-right: 7px; }
.hd.open::before { border: 4px solid transparent; border-top: 7px solid #000; border-bottom: 0; margin-right: 5px; }
.hd.open { margin: 4px 0 1px; height: 19px; box-shadow: 0 -3px #f0f0f0, 0 -4px #aaa; }
.hd i { margin-left: auto; width: 13px; height: 13px; border: 1px solid #999; background: #e2e2e2; font: bold 10px/11px "Liberation Sans", sans-serif; text-align: center; }
.sty { height: 74px; background: #f0f0f0; border-bottom: 1px solid #999; display: flex; gap: 3px; padding: 0 0 2px 2px; }
.pv { width: 66px; height: 71px; border: 1px solid #999; background: linear-gradient(#7cc4f5, #e3f3fb 27%, #9bbc92 27%); }
.pv svg { width: 63px; height: 67px; }
.tx { width: 165px; }
.tx div { border: 1px solid #888; background: #fff; height: 20px; padding: 1px 4px; margin-bottom: 1px; }
.tx div + div { height: 50px; line-height: 13px; padding-top: 3px; letter-spacing: -.12px; }
.si { display: flex; flex-direction: column; gap: 8px; padding: 1px 0 0 4px; }
.si svg { width: 16px; height: 16px; }
.tabs.t2 { height: 26px; }
.nav { height: 31px; margin-left: 3px; background: #f0f0f0; border-bottom: 1px solid #999; display: flex; align-items: center; padding-left: 7px; }
.nav > svg { width: 15px; height: 15px; margin: -3px 9px 0 0; }
.nav .hm { width: 17px; height: 18px; margin: -2px 4px 0 -1px; }
.nav span { width: 161px; height: 23px; margin-top: 5px; background: #fff; border: 1px solid #777; border-bottom: 0; padding: 4px; display: flex; justify-content: space-between; align-items: center; font-size: 12px; letter-spacing: -.25px; }
.nav .det { margin: -3px 0 0 7px; }
.grid { height: 198px; background: #fff; border-bottom: 1px solid #bbb; margin-bottom: 3px; padding: 2px 0 0 6px; display: grid; grid-template-columns: repeat(5, 50px); gap: 2px; align-content: start; }
.grid i { width: 50px; height: 50px; border: 1px solid #999; padding: 1px; background-clip: content-box; }
.grid svg { width: 46px; height: 46px; }
.haze { background-image: linear-gradient(#4fa8d0, #d6ecf5 26%, #d5d3cf 27%); }
.grey { background-image: linear-gradient(#b8c0c6, #e3e6e8 26%, #cbcbc8 27%); }
.sand { background-image: linear-gradient(#b9cfcb, #e3ebe8 26%, #cfcab4 27%); }
.olive { background-image: linear-gradient(#9fb0cb, #d9dfe8 26%, #aab694 27%); }
.green { background-image: linear-gradient(#6bbcf6, #e0f1fb 26%, #96b68c 27%); }
.sky { background-image: linear-gradient(#6bbcf6, #e0f1fb 26%, #c9c9c7 27%); }
.plain { background-image: linear-gradient(#d8d6d2, #d8d6d2); }
.grid .sel { outline: 2px solid #0a77d5; outline-offset: -1px; border-color: #0a77d5; }

.meas { height: 38px; width: 295px; margin-left: 1625px; border-right: 1px solid #aaa; border-bottom: 1px solid #aaa; background: #f2f2f2; padding: 11px 0 0 13px; flex: none; letter-spacing: -.1px; }
.status { height: 27px; display: flex; align-items: center; padding-left: 6px; flex: none; font-size: 12.500px; }
.status svg { width: 15px; height: 15px; margin-right: 15px; }
.status i { width: 1px; height: 10px; background: #999; margin: 0 10px 0 -4px; }
.task { height: 40px; background: linear-gradient(90deg, #243b43, #213440 40%, #1e2b43 80%, #1c2740); display: flex; flex: none; color: #fff; }
.task > b { width: 49px; height: 40px; display: flex; align-items: center; justify-content: center; flex: none; font-weight: 400; }
.task > b svg { width: 22px; height: 22px; }
.task .st { width: 48px; }
.task .st svg { width: 16px; height: 16px; }
.task .tv { width: 48px; }
.find { width: 344px; height: 40px; background: #333; border: 1px solid #666; display: flex; align-items: center; padding-left: 11px; gap: 12px; color: #ccc; font-size: 15px; letter-spacing: -.4px; }
.find svg { width: 16px; height: 16px; fill: none; stroke: #ddd; stroke-width: 1.200px; }
.run { background: linear-gradient(#a3dcf8, #a3dcf8) 50% 100% / 40px 2px no-repeat; }
.run.act { background: linear-gradient(#a3dcf8, #a3dcf8) 0 100% / 49px 2px no-repeat, #4c6069; }
.sys { margin-left: auto; display: flex; align-items: center; padding-right: 24px; gap: 8px; }
.sys svg { width: 16px; height: 16px; }
.l { fill: none; stroke: #fff; stroke-width: 1.300px; }
.clock { width: 64px; margin-left: -8px; text-align: center; font-size: 12px; line-height: 18px; letter-spacing: -.4px; }
.sys .no { width: 17px; height: 17px; margin-left: 8px; }
```
